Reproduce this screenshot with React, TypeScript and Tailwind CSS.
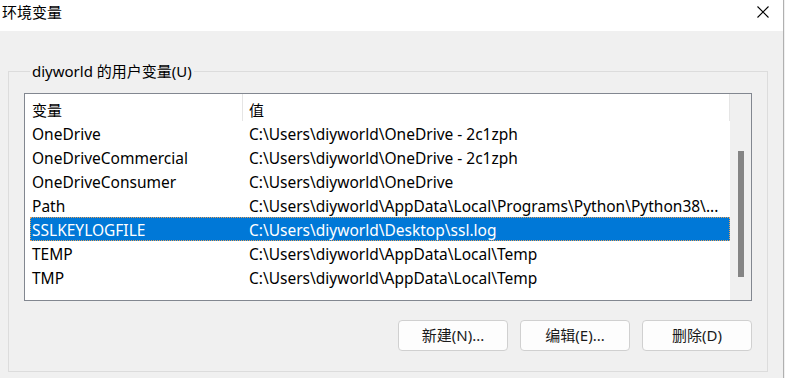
import React from 'react';

const font = "font-['Segoe_UI','Noto_Sans','Noto_Sans_CJK_SC',sans-serif]";

const rows = [
    { name: 'OneDrive', value: 'C:\\Users\\diyworld\\OneDrive - 2c1zph' },
    { name: 'OneDriveCommercial', value: 'C:\\Users\\diyworld\\OneDrive - 2c1zph' },
    { name: 'OneDriveConsumer', value: 'C:\\Users\\diyworld\\OneDrive' },
    { name: 'Path', value: 'C:\\Users\\diyworld\\AppData\\Local\\Programs\\Python\\Python38\\...' },
    { name: 'SSLKEYLOGFILE', value: 'C:\\Users\\diyworld\\Desktop\\ssl.log', selected: true },
    { name: 'TEMP', value: 'C:\\Users\\diyworld\\AppData\\Local\\Temp' },
    { name: 'TMP', value: 'C:\\Users\\diyworld\\AppData\\Local\\Temp' },
];

function DialogButton({ label }: { label: string }) {
    return (
        <button
            type="button"
            className="w-[110px] h-[31px] rounded-[4px] border border-[#d0d0d0] bg-[#fdfdfd] text-[15px] text-[#1a1a1a] leading-none"
        >
            {label}
        </button>
    );
}

export default function App() {
    return (
        <div className={`w-[785px] h-[378px] bg-[#f0f0f0] overflow-hidden ${font}`}>
            <div className="w-[784px] h-full border-r border-[#b0b0b0] flex flex-col">
                {/* Title bar */}
                <div className="h-[31px] bg-white flex items-start justify-between pl-[2px] pr-[14px] pt-[3px] shrink-0">
                    <span className="text-[15px] text-black leading-[18px]">环境变量</span>
                    <svg width="12" height="12" viewBox="0 0 12 12" className="text-black mt-[3px]">
                        <path d="M0.5 0.5 L11.5 11.5 M11.5 0.5 L0.5 11.5" stroke="currentColor" strokeWidth="1.1" fill="none" />
                    </svg>
                </div>

                {/* Body */}
                <div className="pl-[8px] pr-[15px] pt-[30px]">
                    <fieldset className="border border-[#dcdcdc] px-[15px] pb-[20px] min-w-0">
                        <legend className="ml-[6px] px-[2px] text-[15px] leading-[20px] text-black">
                            diyworld 的用户变量(U)
                        </legend>

                        {/* List view */}
                        <div className="mt-[12px] h-[208px] border border-[#828790] bg-white flex">
                            <div className="flex-1 flex flex-col min-w-0">
                                <div className="h-[27px] flex text-[15px] text-black shrink-0">
                                    <div className="w-[218px] pl-[7px] pt-[5px] h-full border-r border-[#e5e5e5]">变量</div>
                                    <div className="flex-1 pl-[6px] pt-[5px] h-full border-r border-[#e5e5e5]">值</div>
                                </div>
                                <div className="pl-[5px] flex flex-col">
                                    {rows.map((r) => (
                                        <div
                                            key={r.name}
                                            className={
                                                r.selected
                                                    ? 'h-[24px] pt-[3px] flex items-center text-[15.5px] text-white bg-[#0078d7] outline-1 outline-dotted outline-[#e8a25a] -outline-offset-1'
                                                    : 'h-[24px] pt-[3px] flex items-center text-[15.5px] text-black'
                                            }
                                        >
                                            <div className="w-[213px] pl-[2px] whitespace-nowrap">{r.name}</div>
                                            <div className="flex-1 pl-[6px] whitespace-nowrap overflow-hidden">{r.value}</div>
                                        </div>
                                    ))}
                                </div>
                            </div>
                            {/* Scrollbar */}
                            <div className="w-[21px] bg-[#f0f0f0] flex justify-center pt-[57px] shrink-0">
                                <div className="w-[6px] h-[126px] bg-[#858585]" />
                            </div>
                        </div>

                        {/* Buttons */}
                        <div className="mt-[19px] flex justify-end gap-[12px]">
                            <DialogButton label="新建(N)..." />
                            <DialogButton label="编辑(E)..." />
                            <DialogButton label="删除(D)" />
                        </div>
                    </fieldset>
                </div>
            </div>
        </div>
    );
}
